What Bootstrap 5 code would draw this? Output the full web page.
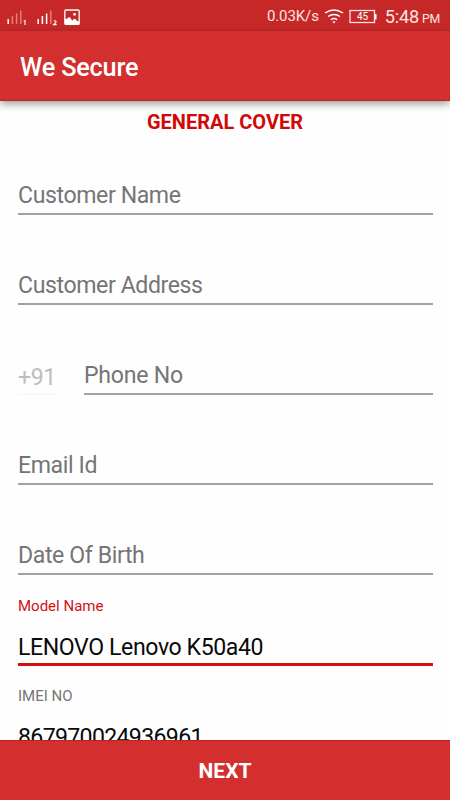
<!DOCTYPE html>
<html lang="en">
<head>
<meta charset="utf-8">
<meta name="viewport" content="width=device-width, initial-scale=1">
<title>We Secure</title>
<link href="https://cdn.jsdelivr.net/npm/bootstrap@5.3.0/dist/css/bootstrap.min.css" rel="stylesheet">
<style>
  body { font-family: Roboto, "Liberation Sans", sans-serif; height: 800px; color: #0a0a0a; background: #fefefe; }
  .status-strip { height: 31px; background: #c62828; color: #fbe3e3; padding: 2px 10px 0 7px; }
  .rate { font-size: 15px; letter-spacing: -.1px; margin-right: 5px; }
  .clock { font-size: 18.2px; letter-spacing: -.2px; margin-left: 7px; gap: 3px; }
  .clock .meridiem { font-size: 12.3px; letter-spacing: -.3px; }
  .app-title { height: 70px; background: #d32f2f; color: #fff; font-size: 25.3px; letter-spacing: -.2px; font-weight: 500; padding: 4px 20px 0; border-bottom: 1px solid #b82424; box-shadow: 0 3px 8px rgba(0,0,0,.38); z-index: 1; }
  .section-title { height: 24px; padding-top: 6px; font-size: 20px; line-height: 30px; font-weight: 700; color: #d00808; }
  .field { height: 90px; padding: 0 17px 0 18px; }
  .entry { font-size: 23.1px; letter-spacing: -.4px; line-height: 26px; padding-bottom: 4px; border-bottom: 2px solid #a2a2a2; color: #757575; }
  .entry.phone { letter-spacing: -.25px; }
  .entry.filled { color: #0a0a0a; }
  .entry.digits { letter-spacing: -.66px; padding-bottom: 2px; }
  .entry.active { border-bottom: 3px solid #d01212; padding-bottom: 2px; margin-bottom: -1px; }
  .entry.code { width: 38px; margin-right: 28px; color: #bdbdbd; border-bottom: 1px solid #f5f5f5; padding-bottom: 3px; }
  .caption { font-size: 15px; line-height: 18px; margin-bottom: 20px; color: #757575; }
  .caption.active { color: #d01212; }
  .next-bar { height: 60px; background: #d32f2f; color: #fff; font-size: 21px; font-weight: 700; padding: 3px 0 0; border: 0; border-top: 1px solid #b82424; border-radius: 0; z-index: 1; }
</style>
</head>
<body class="d-flex flex-column overflow-hidden">
  <div class="status-strip d-flex align-items-center flex-shrink-0">
    <svg width="75" height="24" viewBox="0 0 75 24" aria-hidden="true">
      <g stroke-width="1.500">
        <path stroke="#fff" d="M1.200 19v-5"/>
        <path stroke="#e77c7c" d="M5.400 19v-8M9.600 19v-10.500M13.800 19v-13.500"/>
        <path stroke="#fff" d="M31.200 19v-5M35.400 19v-8M39.600 19v-10.500"/>
        <path stroke="#e77c7c" d="M43.800 19v-13.500"/>
      </g>
      <path fill="none" stroke="#fff" stroke-width="1.100" d="M16.700 16.200l1.300-.6v4.400M46.700 16.300q1.300-1 2.300 0 .4 1-.7 1.700l-1.700 1.600h3"/>
      <rect x="57.800" y="5" width="14.400" height="14.400" rx="1.200" fill="none" stroke="#fff" stroke-width="1.300"/>
      <circle cx="67.500" cy="9.300" r="1.400" fill="#fff"/>
      <path fill="#fff" d="M58 14l2-.3 1.700-1.500q1.600-.4 2.300 1.600l1.200 2 1.800-2 1.700.4 1.500 1.800 2 .5v3H58z"/>
    </svg>
    <span class="rate ms-auto">0.03K/s</span>
    <svg width="20" height="18" viewBox="0 0 20 18" fill="none" stroke="#fff" stroke-width="1.400" aria-hidden="true">
      <path d="M1 5Q10-1 19 5M4 8.500Q10 4.500 16 8.500M6.800 11.700Q10 9.300 13.200 11.700"/>
      <path fill="#fff" stroke="none" d="M8.400 13.800Q10 12.500 11.600 13.800L10 15.500z"/>
    </svg>
    <svg class="ms-1" width="30" height="16" viewBox="0 0 30 16" aria-hidden="true">
      <rect x="2" y="1.500" width="24.500" height="12" fill="none" stroke="#fbe3e3" stroke-width="1.300"/>
      <path stroke="#fff" stroke-width="1.800" d="M27.600 5v5.500"/>
      <text x="14.500" y="11.200" text-anchor="middle" font-size="10" fill="#fff">45</text>
    </svg>
    <div class="clock d-flex align-items-baseline"><span>5:48</span><span class="meridiem">PM</span></div>
  </div>
  <header class="app-title d-flex align-items-center flex-shrink-0 position-relative">We Secure</header>
  <main class="flex-grow-1 overflow-hidden">
    <h1 class="section-title text-center mb-0">GENERAL COVER</h1>
    <div class="field d-flex flex-column justify-content-end"><div class="entry">Customer Name</div></div>
    <div class="field d-flex flex-column justify-content-end"><div class="entry">Customer Address</div></div>
    <div class="field d-flex align-items-end">
      <div class="entry code">+91</div>
      <div class="entry phone flex-grow-1">Phone No</div>
    </div>
    <div class="field d-flex flex-column justify-content-end"><div class="entry">Email Id</div></div>
    <div class="field d-flex flex-column justify-content-end"><div class="entry">Date Of Birth</div></div>
    <div class="field d-flex flex-column justify-content-end">
      <div class="caption active">Model Name</div>
      <div class="entry filled active">LENOVO Lenovo K50a40</div>
    </div>
    <div class="field d-flex flex-column justify-content-end">
      <div class="caption">IMEI NO</div>
      <div class="entry filled digits">867970024936961</div>
    </div>
  </main>
  <button type="button" class="next-bar w-100 flex-shrink-0 position-relative">NEXT</button>
  <script src="https://cdn.jsdelivr.net/npm/bootstrap@5.3.0/dist/js/bootstrap.bundle.min.js"></script>
</body>
</html>
